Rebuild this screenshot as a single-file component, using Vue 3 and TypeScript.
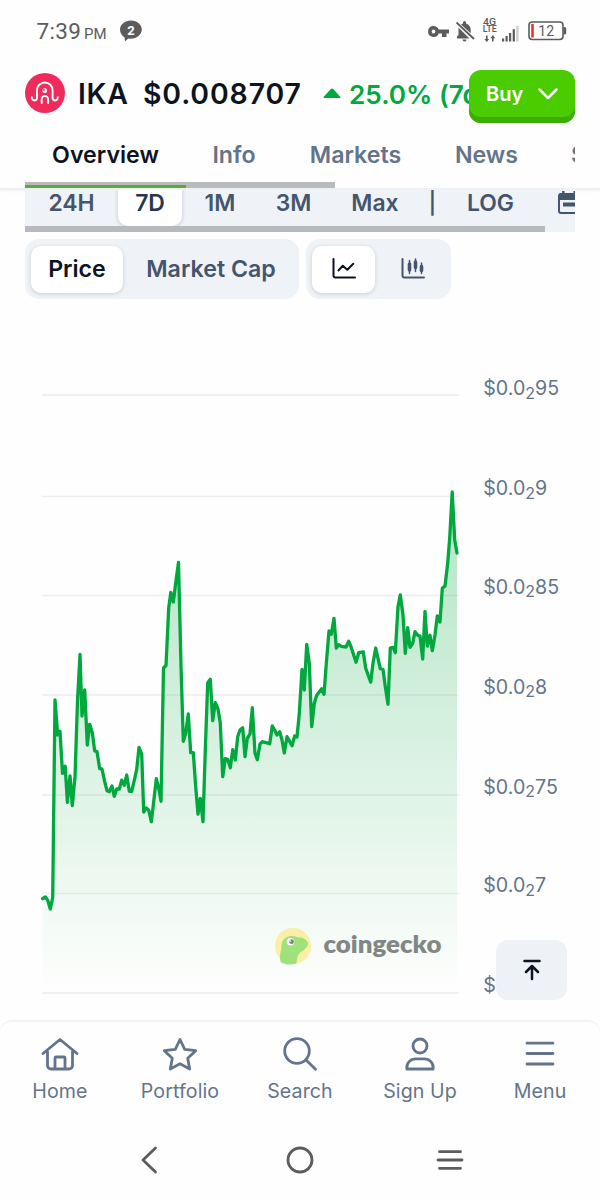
<script setup lang="ts">
interface Cell {
  label: string
  width: number
  active?: boolean
}

const tabs: Cell[] = [
  { label: 'Overview', width: 161, active: true },
  { label: 'Info', width: 96 },
  { label: 'Markets', width: 147 },
  { label: 'News', width: 115 },
]

const ranges: Cell[] = [
  { label: '24H', width: 93 },
  { label: '7D', width: 64, active: true },
  { label: '1M', width: 76 },
  { label: '3M', width: 71 },
  { label: 'Max', width: 92 },
  { label: '|', width: 23 },
  { label: 'LOG', width: 93 },
]

const gridLines: number[] = [395, 496.5, 595.5, 695, 795, 893.5, 993]

const axisLabels: { y: number; tail: string }[] = [
  { y: 395, tail: '95' },
  { y: 495, tail: '9' },
  { y: 593.5, tail: '85' },
  { y: 693.5, tail: '8' },
  { y: 793.5, tail: '75' },
  { y: 892, tail: '7' },
  { y: 992, tail: '65' },
]

const series: [number, number][] = [
  [42.7, 898.7], [45.3, 897], [47.7, 900.3], [50.3, 909], [52.7, 897.3], [55, 700], [57.7, 735], [60, 731.3],
  [62.5, 773.3], [65.2, 766.3], [67.4, 802.3], [70, 776], [72.3, 805.7], [75, 776.7], [77.5, 701], [80, 654.5],
  [82, 716], [84.7, 690], [87.3, 745], [89.7, 724.3], [92.3, 732.7], [94.7, 751], [97, 751.7], [99.7, 768.7],
  [102, 769], [104.7, 781.7], [107, 790.7], [109.3, 791.7], [112, 786], [114.3, 796.3], [116.7, 789], [119.3, 789],
  [121.7, 780.3], [124.3, 785.3], [126.7, 775], [129.3, 791.3], [131.7, 791.3], [134, 781.7], [136.7, 769.3],
  [139, 747.3], [141.7, 754], [143.7, 812], [146.3, 808], [148.7, 810], [151.3, 821.7], [153.7, 801.7],
  [156.3, 778.7], [158.7, 788.3], [161, 801.3], [163.5, 668], [166, 665.5], [168.7, 608], [170.8, 592.5],
  [173.3, 602], [176, 580.7], [178.5, 562.5], [181, 666], [183.3, 741.3], [185.7, 733.3], [188.3, 714],
  [190.7, 752.7], [193.3, 752.7], [195.7, 786.7], [198, 814], [200.3, 798.3], [203, 821.7], [205.3, 750],
  [207.7, 682.7], [210.3, 679.3], [212.7, 720.7], [215.3, 702.7], [218, 709], [220.3, 723.3], [222.7, 776.7],
  [225.3, 758.7], [227.7, 759.3], [230.3, 767.7], [232.7, 749.7], [235.3, 760], [237.7, 736.7], [240, 730],
  [242.7, 727.7], [245, 756.7], [247.3, 738.3], [250, 734], [252.3, 707.7], [255, 753.3], [257.3, 759.7],
  [260, 744], [262.3, 741.7], [264.7, 742.3], [269.7, 743.7], [272.3, 726], [274.7, 730], [277, 735],
  [279.7, 731.7], [282, 740], [284.3, 753], [287, 736.7], [289.3, 740.7], [292, 745.7], [294.7, 736],
  [297, 737], [299.3, 713.3], [302, 669.3], [304.3, 690], [306.7, 644.3], [309.3, 663.3], [311.7, 726.7],
  [314.3, 703.3], [316.7, 695.3], [321.7, 688.7], [324, 694.3], [326.3, 663.3], [329, 631], [331.3, 634.3],
  [334, 618.3], [336.3, 648], [338.7, 644.7], [341.3, 646.3], [346, 647], [348.7, 641.3], [351, 646.7],
  [353.7, 655], [356, 662.3], [358.7, 652.7], [363.3, 652], [365.7, 668.3], [370.7, 682.3], [373, 663.3],
  [375.7, 648], [380.3, 668.7], [383, 669.3], [385.3, 686.7], [388, 704.3], [390.3, 648], [393, 647.3],
  [395.3, 652.7], [398, 606.7], [400.3, 594.8], [403, 615], [405.3, 653.3], [407.7, 627.7], [410, 647.3],
  [412.7, 643.3], [415, 631.7], [417.7, 635.3], [420, 636], [422.7, 659], [425, 611.3], [427.3, 646],
  [430, 635.3], [432.3, 650.7], [435, 635], [437.3, 616], [440, 622], [442.3, 588.3], [445, 586],
  [447.7, 563.3], [449.7, 538], [452.2, 492], [454.7, 540], [457, 553],
]

const line = series.map(([x, y]) => `${x},${y}`).join(' ')
const area = `42.7,993 ${line} 457,993`
</script>

<template>
  <div class="screen">
    <div class="status">
      <span class="clock">7:39</span><span class="ampm">PM</span>
      <svg class="bubble" width="24" height="24" viewBox="0 0 24 24">
        <path d="M12 1.500c6 0 10.800 4 10.800 9s-4.800 9.200-10.800 9.200c-1 0-2-.1-2.800-.3L6 22.400l-.4-3.900C3 16.600 1 14 1 10.500c0-5 5-9 11-9z" fill="#5c5c5c" />
        <text x="12" y="15.500" text-anchor="middle" class="bubble-num">2</text>
      </svg>
      <svg class="sys-icons" width="142" height="32" viewBox="426 15 142 32">
        <g fill="#5c5c5c">
          <path fill-rule="evenodd" d="M433.500 26a5.500 5.500 0 1 0 5.200 7.500h3.300v3.500h4.500v-3.500h2.500v-4h-10.300a5.500 5.500 0 0 0-5.200-3.500zm0 3.600a1.900 1.900 0 1 1 0 3.800 1.900 1.900 0 0 1 0-3.800z" />
          <path d="M458.500 27.500l11 11H457v-2l1.500-1.500zM461 24.500l2-1v-1a1.500 1.500 0 0 1 3 0v1c3.200.8 4.700 3.500 4.700 6.500v3.200z" />
          <path d="M462.500 39.500h4a2 2 0 0 1-4 0z" />
          <path d="M456.500 22.500l17.500 16.500" stroke="#5c5c5c" stroke-width="1.800" />
          <path d="M486 35.500h1.600v3.500h1.600l-2.400 3-2.400-3h1.600zM492 41.500h1.600v-3.300h1.600l-2.400-3.200-2.400 3.200h1.600z" />
        </g>
        <g class="lte" fill="#5c5c5c">
          <text x="483" y="24.800" textLength="13" lengthAdjust="spacingAndGlyphs">4G</text>
          <text x="482.800" y="32.400" textLength="14" lengthAdjust="spacingAndGlyphs">LTE</text>
        </g>
        <g fill="#5c5c5c">
          <rect x="502" y="38.500" width="2.200" height="3" />
          <rect x="505.500" y="36" width="2.200" height="5.500" />
          <rect x="509" y="33" width="2.200" height="8.500" />
          <rect x="512.700" y="29.200" width="2.200" height="12.300" />
          <rect x="516.200" y="26" width="2.400" height="15.500" fill="#cfcfcf" />
        </g>
        <rect x="529" y="22" width="34" height="17.500" rx="3.200" fill="none" stroke="#5c5c5c" stroke-width="1.600" />
        <path d="M563.500 27h1.200q1.500 0 1.500 1.500v4.500q0 1.500-1.500 1.500h-1.200z" fill="#5c5c5c" />
        <rect x="531.200" y="24" width="2.600" height="13.500" fill="#e8352c" />
        <text x="546.200" y="35.900" text-anchor="middle" class="battery-num">12</text>
      </svg>
    </div>

    <header class="coin">
      <svg class="coin-logo" width="40" height="40" viewBox="0 0 40 40">
        <circle cx="20" cy="20" r="20" fill="#ee2b5b" />
        <g fill="none" stroke="#fff" stroke-width="1.900" stroke-linecap="round">
          <path d="M6.800 24.300c.1 2.100 1.100 3.200 2.600 3.200 1.700 0 2.600-1.200 2.600-3V17.300a7.800 7.800 0 0 1 15.600 0V24.500c0 1.800.9 3 2.600 3 1.500 0 2.500-1.100 2.600-3.200" />
          <path d="M16.700 30v-3.800a3.200 3.200 0 0 1 6.400 0V30" />
        </g>
        <circle cx="19.800" cy="17.700" r="2.400" fill="#fff" />
        <circle cx="18.900" cy="17" r=".9" fill="#ee2b5b" />
      </svg>
      <span class="ticker">IKA</span>
      <span class="price">$0.008707</span>
      <svg class="up" width="18" height="11" viewBox="0 0 18 11"><path d="M9 .5q.6 0 1.200.6l7 7.600q1 1.300-.7 1.300h-15q-1.700 0-.7-1.300l7-7.600Q8.400.5 9 .5z" fill="#00a83e" /></svg>
      <span class="change">25.0% (7d)</span>
      <button class="buy">
        <span>Buy</span>
        <svg width="20" height="12" viewBox="0 0 20 12"><path d="M1.500 1.500l8.500 8.500 8.500-8.500" fill="none" stroke="#fff" stroke-width="2.500" stroke-linecap="round" stroke-linejoin="round" /></svg>
      </button>
    </header>

    <nav class="tabs">
      <div class="tab-strip">
        <span v-for="t in tabs" :key="t.label" class="tab" :class="{ active: t.active }" :style="{ width: t.width + 'px' }">{{ t.label }}</span>
        <span class="tab last">Socials</span>
      </div>
      <div class="tab-scroll"><div class="tab-line"></div></div>
    </nav>

    <div class="range">
      <div class="range-strip">
        <span v-for="r in ranges" :key="r.label" class="range-item" :class="{ active: r.active, bar: r.label === '|' }" :style="{ width: r.width + 'px' }">{{ r.label }}</span>
        <svg class="calendar" width="24" height="26" viewBox="0 0 24 26">
          <path d="M4 4h16a2 2 0 0 1 2 2v15a2 2 0 0 1-2 2H4a2 2 0 0 1-2-2V6a2 2 0 0 1 2-2z" fill="none" stroke="#45556c" stroke-width="2" />
          <path d="M2 4h20v6H2zM5 1h2.500v5H5zM16.500 1H19v5h-2.500zM6 12.500h12v4H6z" fill="#45556c" />
        </svg>
      </div>
      <div class="range-scroll"></div>
    </div>

    <div class="toggles">
      <div class="group kind">
        <span class="pill on price-pill">Price</span>
        <span class="pill cap-pill">Market Cap</span>
      </div>
      <div class="group style">
        <span class="pill on icon-pill">
          <svg width="24" height="22" viewBox="0 0 24 22" fill="none" stroke="#0d1421" stroke-width="2" stroke-linecap="round" stroke-linejoin="round">
            <path d="M1.500 1v16.500a2 2 0 0 0 2 2H23" /><path d="M6.500 12.500l4.300-4.800 4.500 4 6-6" />
          </svg>
        </span>
        <span class="pill icon-pill">
          <svg width="24" height="22" viewBox="0 0 24 22" fill="none" stroke="#45556c" stroke-width="2" stroke-linecap="round" stroke-linejoin="round">
            <path d="M1.500 1v16.500a2 2 0 0 0 2 2H23" />
            <path d="M8.500 2.500v13M14.500 1v12.500M20.500 5v10.500" stroke-width="1.500" />
            <path d="M8.500 6v6M14.500 4v5.500M20.500 8.500v4" stroke-width="3.600" />
          </svg>
        </span>
      </div>
    </div>

    <main class="chart">
      <svg width="600" height="721" viewBox="0 299 600 721">
        <defs>
          <linearGradient id="fade" gradientUnits="userSpaceOnUse" x1="0" y1="492" x2="0" y2="993">
            <stop offset="0" stop-color="#00a83e" stop-opacity=".3" />
            <stop offset="1" stop-color="#00a83e" stop-opacity="0" />
          </linearGradient>
        </defs>
        <line v-for="y in gridLines" :key="y" x1="42" x2="459" :y1="y" :y2="y" stroke="#ecedef" stroke-width="1.500" />
        <polygon :points="area" fill="url(#fade)" />
        <polyline :points="line" fill="none" stroke="#00a83e" stroke-width="3.300" stroke-linejoin="round" stroke-linecap="round" />
        <g class="axis">
          <text v-for="a in axisLabels" :key="a.y" x="483.300" :y="a.y">$0.0<tspan class="sub" dy="3.500">2</tspan><tspan dy="-3.500">{{ a.tail }}</tspan></text>
        </g>
        <circle cx="293" cy="946" r="18" fill="#fbeea6" />
        <path d="M281 962.500c-2.500-6 0-10 .5-15-.5-6 3-11 9-11.500 4-.4 6 1.500 9.500 1.500 4.500.5 8.500 3.500 8 7-1 5-7 6-9.500 10-1.700 3-1.500 6-2.500 9.300-5 1.500-11 .7-15-1.300z" fill="#9fe27b" />
        <circle cx="290.500" cy="941.700" r="3.800" fill="#fff" />
        <circle cx="291.600" cy="941.700" r="2.400" fill="#7c8781" />
        <circle cx="290.300" cy="941" r=".8" fill="#fff" />
        <text x="323.500" y="953" class="brand" textLength="118" lengthAdjust="spacingAndGlyphs">coingecko</text>
      </svg>
      <button class="top">
        <svg width="20" height="22" viewBox="0 0 20 22" fill="none" stroke="#0d1421" stroke-width="2.500" stroke-linecap="round" stroke-linejoin="round">
          <path d="M2.500 2h15M10 20V8M4 13l6-6 6 6" />
        </svg>
      </button>
    </main>

    <nav class="bottom">
      <div class="nav-item">
        <svg width="40" height="36" viewBox="0 0 40 36"><path d="M3 17.500L20 3.500l17 14M7.500 15V29.500A3.500 3.500 0 0 0 11 33h18a3.500 3.500 0 0 0 3.500-3.500V15M15 32.500V22a1 1 0 0 1 1-1h8a1 1 0 0 1 1 1v10.500" /></svg>
        <span>Home</span>
      </div>
      <div class="nav-item">
        <svg width="40" height="36" viewBox="0 0 40 36"><path d="M20 3.500l4.700 9.800 11 1.400-8 7.500 2 10.800-9.700-5.200-9.700 5.200 2-10.800-8-7.500 11-1.400z" /></svg>
        <span>Portfolio</span>
      </div>
      <div class="nav-item">
        <svg width="40" height="36" viewBox="0 0 40 36"><circle cx="17" cy="15" r="12.300" /><path d="M26 24l9.500 9.200" /></svg>
        <span>Search</span>
      </div>
      <div class="nav-item">
        <svg width="40" height="36" viewBox="0 0 40 36"><circle cx="20" cy="10" r="7" /><path d="M6.900 33C6.200 26.800 10.500 22.900 16 22.900h8c5.500 0 9.800 3.900 9.100 10.100z" /></svg>
        <span>Sign Up</span>
      </div>
      <div class="nav-item">
        <svg width="40" height="36" viewBox="0 0 40 36"><path d="M7 7.200h26M7 17.500h26M7 28h26" /></svg>
        <span>Menu</span>
      </div>
    </nav>

    <div class="system">
      <svg width="30" height="30" viewBox="0 0 30 30"><path d="M20.500 3L8 15l12.500 12" /></svg>
      <svg width="30" height="30" viewBox="0 0 30 30"><circle cx="15" cy="15" r="12" /></svg>
      <svg width="30" height="30" viewBox="0 0 30 30"><path d="M4.500 6.700h21M3 15h24M4.500 23.300h21" /></svg>
    </div>
  </div>
</template>

<style scoped>
.screen {
  width: 600px;
  height: 1200px;
  overflow: hidden;
  background: #fefefe;
  font-family: Inter, "Liberation Sans", sans-serif;
  color: #0d1421;
  display: flex;
  flex-direction: column;
}
.status {
  height: 62px;
  flex: none;
  box-sizing: border-box;
  padding: 0 32px 0 36.5px;
  display: flex;
  align-items: center;
  font-family: Roboto, sans-serif;
  color: #5c5c5c;
}
.clock { font-size: 22.5px; letter-spacing: 0.3px; }
.ampm { font-size: 15px; margin: 5px 0 0 3px; }
.bubble { margin-left: 12px; }
.bubble-num { font: 700 13px Roboto, sans-serif; fill: #fff; }
.sys-icons { margin-left: auto; }
.lte { font: 500 8.5px Roboto, sans-serif; }
.battery-num { font: 400 14px Roboto, sans-serif; fill: #5c5c5c; }
.coin {
  position: relative;
  height: 63px;
  display: flex;
  align-items: center;
  padding-left: 25px;
  white-space: nowrap;
  font-weight: 600;
  font-size: 28.4px;
  flex-shrink: 0;
}
.coin-logo { flex: none; margin-bottom: 1.5px; }
.ticker { width: 65px; margin-left: 13px; letter-spacing: 0.7px; }
.price { width: 180px; letter-spacing: 0.9px; }
.up { flex: none; margin-right: 8px; }
.change { color: #00a83e; font-size: 26.2px; margin-top: 1px; }
.buy {
  position: absolute;
  left: 469px;
  top: 8px;
  width: 106px;
  height: 53px;
  border: 0;
  border-radius: 12px;
  background: #4bcc00;
  box-shadow: inset 0 -6px 0 #3cad00;
  color: #fff;
  font: 600 20px Inter, sans-serif;
  padding: 0 17px 6px;
  display: flex;
  align-items: center;
  justify-content: space-between;
}
.tabs {
  height: 65px;
  flex: none;
  box-sizing: border-box;
  padding: 0 25px;
  border-bottom: 2px solid #eef0f3;
  box-shadow: 0 1px 3px rgba(0, 0, 0, 0.05);
  display: flex;
  flex-direction: column;
}
.tab-strip {
  height: 57px;
  flex: none;
  display: flex;
  overflow: hidden;
  line-height: 60px;
  font-size: 23.2px;
  font-weight: 600;
  color: #64748b;
}
.tab { flex: none; text-align: center; }
.tab.active { color: #0d1421; }
.tab.last { padding-left: 27px; }
.tab-scroll { width: 310px; height: 6px; flex: none; background: #b9bbba; padding-top: 3px; box-sizing: border-box; }
.tab-line { width: 161px; height: 3px; background: #5da83c; }
.range {
  height: 42px;
  flex: none;
  margin: 0 25px;
  background: #eff2f7;
  overflow: hidden;
  display: flex;
  flex-direction: column;
}
.range-strip {
  height: 36px;
  flex: none;
  display: flex;
  font-size: 22.9px;
  font-weight: 600;
  color: #45556c;
}
.range-item { flex: none; height: 52px; margin-top: -16px; line-height: 58px; text-align: center; border-radius: 10px; }
.range-item.active { background: #fff; color: #27364c; box-shadow: 0 1px 4px rgba(15, 23, 42, 0.18); }
.range-item.bar { line-height: 55px; font-weight: 500; font-size: 24px; }
.calendar { flex: none; margin: 0 0 0 20px; }
.range-scroll { height: 6px; width: 520px; background: #b6b9be; flex: none; }
.toggles { display: flex; gap: 7px; margin: 7px 0 0 25px; height: 60px; flex: none; }
.group { background: #eff2f7; border-radius: 14px; padding: 6.5px 6px; box-sizing: border-box; display: flex; }
.kind { width: 274px; }
.style { width: 145px; gap: 6px; }
.pill { flex: none; font-size: 23.2px; font-weight: 600; color: #45556c; line-height: 47px; border-radius: 10px; text-align: center; height: 47px; }
.pill.on { background: #fff; color: #0d1421; box-shadow: 0 1px 4px rgba(15, 23, 42, 0.16); }
.price-pill { width: 92px; }
.cap-pill { width: 176px; }
.icon-pill { width: 63px; display: flex; align-items: center; justify-content: center; }
.chart { position: relative; height: 721px; flex: none; }
.chart > svg { display: block; }
.axis { font: 400 19.6px Inter, sans-serif; fill: #64748b; }
.sub { font-size: 16px; }
.brand { font: 800 24px Lato, sans-serif; fill: #808785; }
.top {
  position: absolute;
  left: 496px;
  top: 641px;
  width: 71px;
  height: 60px;
  border: 0;
  border-radius: 12px;
  background: #eef1f5;
  padding: 0;
  display: flex;
  align-items: center;
  justify-content: center;
}
.bottom {
  height: 98px;
  flex: none;
  box-sizing: border-box;
  border-top: 2px solid #f2f3f4;
  border-radius: 12px 12px 0 0;
  display: flex;
  padding-top: 14px;
}
.nav-item { width: 120px; display: flex; flex-direction: column; align-items: center; font-size: 19.6px; color: #64748b; letter-spacing: 0.1px; }
.nav-item svg { fill: none; stroke: #64748b; stroke-width: 2.8; stroke-linecap: round; stroke-linejoin: round; }
.nav-item span { margin-top: 7px; line-height: 24px; }
.system { display: flex; justify-content: center; gap: 120px; padding-top: 27px; height: 55px; }
.system svg { fill: none; stroke: #5c5c5c; stroke-width: 2.8; stroke-linecap: round; stroke-linejoin: round; }
</style>

<style>
body { margin: 0; background: #fefefe; }
</style>
